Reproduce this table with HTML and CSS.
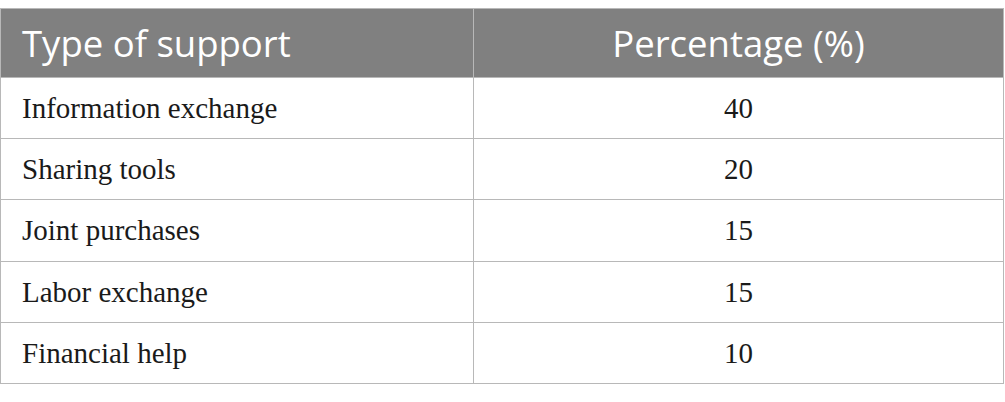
FILE: index.html
```html
<!DOCTYPE html>
<html>
<head>
<meta charset="utf-8">
<link rel="stylesheet" href="styles.css">
</head>
<body>
<table class="data">
  <thead>
    <tr><th class="c1">Type of support</th><th class="c2">Percentage (%)</th></tr>
  </thead>
  <tbody>
    <tr><td class="c1">Information exchange</td><td class="c2">40</td></tr>
    <tr><td class="c1">Sharing tools</td><td class="c2">20</td></tr>
    <tr><td class="c1">Joint purchases</td><td class="c2">15</td></tr>
    <tr><td class="c1">Labor exchange</td><td class="c2">15</td></tr>
    <tr><td class="c1">Financial help</td><td class="c2">10</td></tr>
  </tbody>
</table>
</body>
</html>
```
FILE: styles.css
```css
html, body { margin: 0; padding: 0; background: #fff; }
body { padding-top: 8px; }
.data {
  border-collapse: collapse;
  width: 1004px;
  table-layout: fixed;
}
.data th, .data td {
  border: 1px solid #b8b8b8;
  padding: 0 21px;
  vertical-align: middle;
}
.data .c1 { width: 473px; text-align: left; }
.data .c2 { text-align: center; }
.data th {
  background: #808080;
  color: #fff;
  font-family: "Open Sans", sans-serif;
  font-weight: 400;
  font-size: 36.5px;
  line-height: 40px;
  height: 69px;
  box-sizing: border-box;
}
.data td {
  font-family: "Liberation Serif", serif;
  font-size: 29px;
  line-height: 32px;
  color: #1a1a1a;
  height: 61.2px;
  box-sizing: border-box;
}
```
